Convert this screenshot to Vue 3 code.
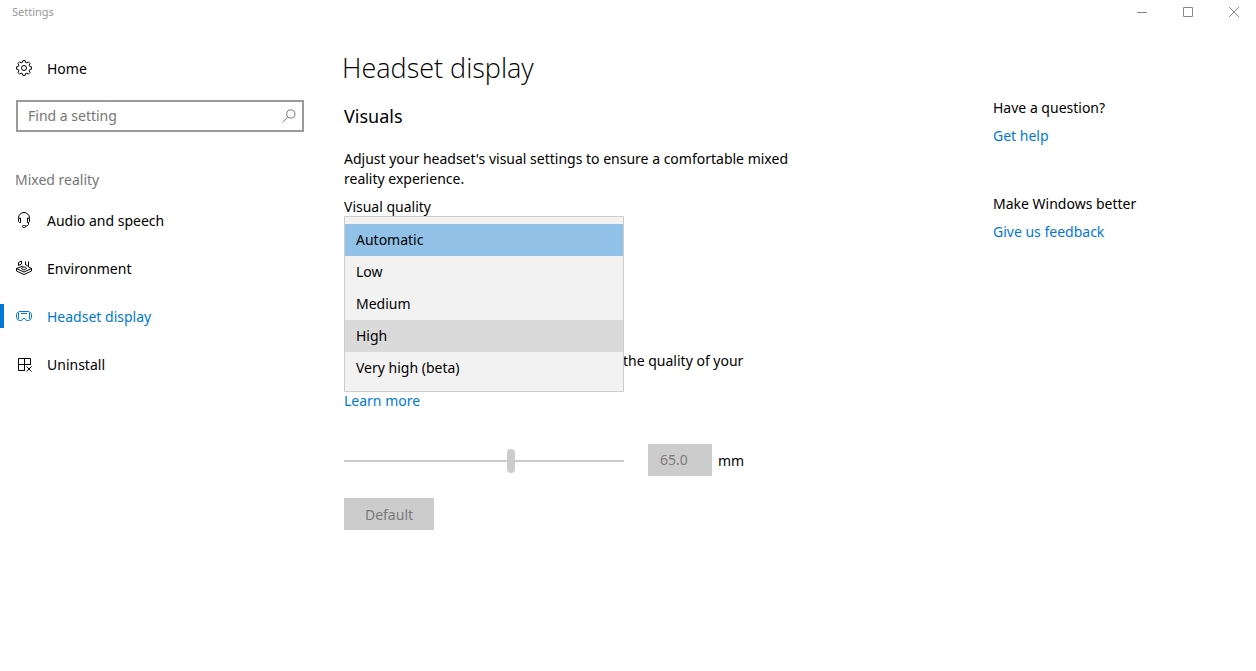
<script setup>
import { ref } from 'vue'

const query = ref('')
const quality = ref('automatic')
const distance = ref(65)

const options = [
  { value: 'automatic', label: 'Automatic' },
  { value: 'low', label: 'Low' },
  { value: 'medium', label: 'Medium' },
  { value: 'high', label: 'High', hovered: true },
  { value: 'very-high', label: 'Very high (beta)' },
]
</script>

<template>
  <div class="window">
    <header class="titlebar">
      <span class="caption">Settings</span>
      <div class="controls">
        <button type="button" aria-label="Minimize">
          <svg width="10" height="10" viewBox="0 0 10 10"><path d="M0 5.5h10" /></svg>
        </button>
        <button type="button" aria-label="Maximize">
          <svg width="10" height="10" viewBox="0 0 10 10"><path d="M.5.5h9v9h-9z" /></svg>
        </button>
        <button type="button" aria-label="Close">
          <svg width="10" height="10" viewBox="0 0 10 10"><path d="M0 0l10 10M10 0L0 10" /></svg>
        </button>
      </div>
    </header>

    <div class="body">
      <nav class="sidebar">
        <a class="item home" href="#home">
          <svg class="icon" viewBox="0 0 16 16">
            <path d="M6.8.6h2.4l.4 1.8 1.2.5 1.6-1 1.7 1.7-1 1.6.5 1.2 1.8.4v2.4l-1.8.4-.5 1.2 1 1.6-1.7 1.7-1.6-1-1.2.5-.4 1.8H6.8l-.4-1.8-1.2-.5-1.6 1-1.7-1.7 1-1.6-.5-1.2-1.8-.4V6.8l1.8-.4.5-1.2-1-1.6 1.7-1.7 1.6 1 1.2-.5z" />
            <circle cx="8" cy="8" r="2.5" />
          </svg>
          <span>Home</span>
        </a>

        <div class="search">
          <input v-model="query" type="text" placeholder="Find a setting" aria-label="Find a setting" />
          <svg class="glass" viewBox="0 0 14 14">
            <circle cx="8.8" cy="5" r="4.1" />
            <path d="M5.8 8L.6 13.2" />
          </svg>
        </div>

        <h2 class="group">Mixed reality</h2>

        <a class="item" href="#audio">
          <svg class="icon" viewBox="0 0 16 16">
            <path d="M2.5 6.5V6a5.5 5.5 0 0 1 11 0v.5M4.5 6v4.5h-1l-1-1v-3zM11.5 6v4.5h1l1-1v-3zM12.5 10.5v2L11 14H9.5" />
            <rect x="6.5" y="13.5" width="3" height="2" rx="1" />
          </svg>
          <span>Audio and speech</span>
        </a>
        <a class="item" href="#environment">
          <svg class="icon" viewBox="0 0 16 16">
            <path d="M2.5 5.5v-3l3-1.500v3zM9.500 5V1.500M9.500 4.500l3 2V1.500M7 6L.5 8.500 8 12l7.500-3.500-3-1.500M.5 8.500V11L8 14.500l7.500-3.500V8.500" />
            <path d="M5.500 8.500c0-1 1.200-1.500 2.500-1.500s2.500.5 2.500 1.500L8 10z" />
          </svg>
          <span>Environment</span>
        </a>
        <a class="item active" href="#headset" aria-current="page">
          <svg class="icon" viewBox="0 0 16 16">
            <path d="M4 3.500h8l2.500 1 1 2v3l-1 2-2 1h-2l-1.500-2H7l-1.500 2h-2l-2-1-1-2v-3l1-2zM5 5.500h6M2.500 5v6M13.500 5v6" />
          </svg>
          <span>Headset display</span>
        </a>
        <a class="item" href="#uninstall">
          <svg class="icon" viewBox="0 0 16 16">
            <path d="M9 14.500H2.500v-12h12V9M8.500 2.500v12M2.500 8.500h12M10.500 10.500l5 5M15.500 10.500l-5 5" />
          </svg>
          <span>Uninstall</span>
        </a>
      </nav>

      <main class="content">
        <h1>Headset display</h1>
        <h2 class="section">Visuals</h2>
        <p class="intro">Adjust your headset's visual settings to ensure a comfortable mixed reality experience.</p>

        <label class="field-label" for="quality">Visual quality</label>
        <div class="dropdown">
          <select id="quality" v-model="quality" size="5">
            <option
              v-for="o in options"
              :key="o.value"
              :value="o.value"
              :class="{ hovered: o.hovered }"
            >{{ o.label }}</option>
          </select>
        </div>

        <p class="note">the quality of your</p>
        <a class="link learn" href="#learn">Learn more</a>

        <div class="distance">
          <input v-model="distance" class="slider" type="range" min="59" max="69" aria-label="Distance slider" disabled />
          <input id="mm" class="value" type="text" value="65.0" disabled />
          <label for="mm">mm</label>
        </div>
        <button class="default" type="button" disabled>Default</button>
      </main>

      <aside class="help">
        <h2>Have a question?</h2>
        <a class="link" href="#help">Get help</a>
        <h2>Make Windows better</h2>
        <a class="link" href="#feedback">Give us feedback</a>
      </aside>
    </div>
  </div>
</template>

<style>
body {
  background: #fff;
}
</style>

<style scoped>
.window {
  color: #000;
  font: 14px/20px "Noto Sans", "Open Sans", sans-serif;
}

h1,
h2,
p {
  margin: 0;
  font-size: inherit;
  font-weight: 400;
}

a {
  color: inherit;
  text-decoration: none;
}

button,
input,
select {
  box-sizing: border-box;
  margin: 0;
  border: 0;
  border-radius: 0;
  font: inherit;
}

svg {
  flex: none;
  fill: none;
  stroke: currentColor;
}

.titlebar {
  display: flex;
  justify-content: space-between;
  align-items: center;
  height: 24px;
  padding-left: 12px;
  color: #999;
  font-size: 11px;
}

.controls {
  display: flex;
  margin-right: -1px;
}

.controls button {
  display: flex;
  align-items: center;
  justify-content: center;
  width: 46px;
  height: 24px;
  padding: 0;
  background: none;
  color: #888;
}

.body {
  display: grid;
  grid-template-columns: 304px minmax(450px, 1fr) 263px;
}

.sidebar {
  padding-top: 20px;
}

.item {
  display: flex;
  align-items: center;
  gap: 15px;
  height: 24px;
  margin-bottom: 24px;
  padding-left: 12px;
  border-left: 4px solid transparent;
  line-height: 22px;
}

.item span {
  padding-top: 2px;
}

.icon {
  width: 16px;
  height: 16px;
}

.item.home {
  margin: 12px 0 20px;
}

.item.active {
  border-left-color: #0078d7;
  color: #0078d7;
}

.search {
  display: flex;
  align-items: center;
  height: 28px;
  margin-left: 16px;
  border: 2px solid #999;
  padding-right: 6px;
}

.search input {
  flex: 1;
  min-width: 0;
  padding: 0 10px;
  background: none;
  outline: none;
}

.search input::placeholder {
  color: #767676;
  opacity: 1;
}

.glass {
  width: 14px;
  height: 14px;
  color: #777;
}

.group {
  margin: 38px 0 18px 15px;
  color: #767676;
}

.content {
  padding: 24px 0 0 40px;
}

h1 {
  margin-left: -2px;
  font-family: "Open Sans", "Noto Sans", sans-serif;
  font-size: 27px;
  font-weight: 300;
  line-height: 40px;
}

.section {
  margin-top: 16px;
  font-size: 18px;
  line-height: 24px;
}

.intro {
  max-width: 450px;
  margin-top: 21px;
}

.field-label {
  display: block;
  margin-top: 8px;
}

.dropdown {
  position: relative;
  width: 280px;
  height: 32px;
  margin-top: -1px;
}

.dropdown select {
  position: absolute;
  top: 0;
  left: 0;
  width: 100%;
  height: 176px;
  padding: 7px 0;
  border: 1px solid #ccc;
  background: #f2f2f2;
  color: #000;
  overflow: hidden;
  outline: none;
}

.dropdown option {
  min-height: 32px;
  box-sizing: border-box;
  padding: 6px 11px;
  color: #000;
  line-height: 20px;
}

.dropdown option:checked {
  background: #91c1e7 linear-gradient(#91c1e7, #91c1e7);
  color: #000;
}

.dropdown option.hovered {
  background: #dadada;
}

.note {
  margin: 103px 0 20px 279px;
}

.link {
  color: #0078d7;
}

.learn {
  display: block;
  width: max-content;
}

.distance {
  display: flex;
  align-items: center;
  margin: 33px 0 22px;
}

.distance label {
  padding-top: 2px;
}

.slider {
  width: 280px;
  height: 24px;
  margin-top: 2px;
  appearance: none;
  background: linear-gradient(#ccc, #ccc) center / 100% 2px no-repeat;
}

.slider::-webkit-slider-thumb {
  appearance: none;
  width: 8px;
  height: 24px;
  border-radius: 4px;
  background: #ccc;
}

.value {
  width: 64px;
  height: 32px;
  margin: 0 6px 0 24px;
  padding: 0 12px 2px;
  background: #ccc;
  color: #7a7a7a;
}

.default {
  display: block;
  width: 90px;
  height: 32px;
  padding: 2px 0 0;
  background: #ccc;
  color: #7a7a7a;
}

.help {
  padding-top: 74px;
}

.help h2 {
  margin-bottom: 8px;
}

.help .link {
  display: block;
  width: max-content;
  margin-bottom: 48px;
}
</style>
